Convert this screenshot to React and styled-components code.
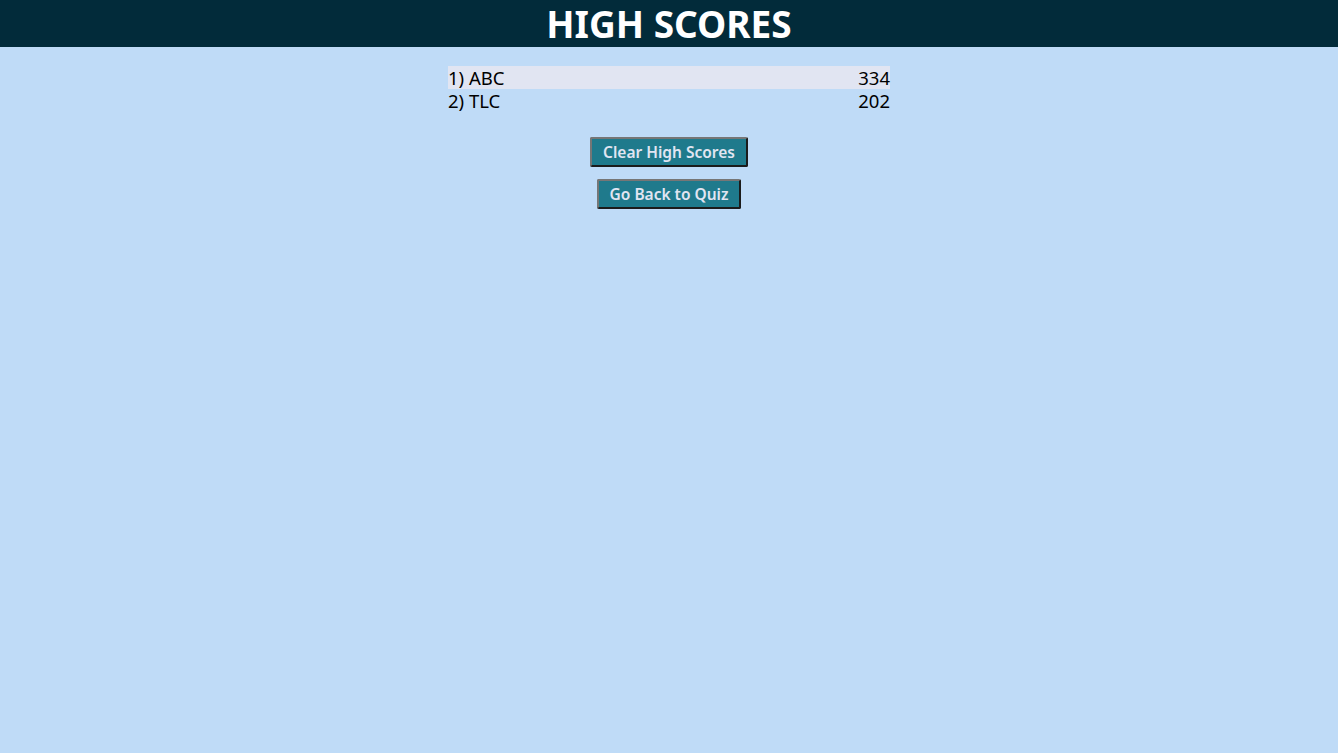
import React from 'react';
import styled, { createGlobalStyle } from 'styled-components';

const GlobalStyle = createGlobalStyle`
  html, body {
    margin: 0;
    padding: 0;
    background: #bfdbf7;
    font-family: "Trebuchet MS", "Noto Sans", sans-serif;
  }
`;

const Page = styled.div`
  min-height: 753px;
  background: #bfdbf7;
`;

const Header = styled.header`
  height: 47px;
  background: #022b3a;
  display: flex;
  align-items: center;
  justify-content: center;
`;

const Title = styled.h1`
  margin: 0;
  padding-top: 2px;
  color: #ffffff;
  font-size: 37px;
  font-weight: 700;
  line-height: 1.1;
`;

const Main = styled.main`
  display: flex;
  flex-direction: column;
  align-items: center;
  padding-top: 19px;
`;

const ScoreList = styled.ol`
  list-style: none;
  margin: 0 0 25px;
  padding: 0;
  width: 442px;
`;

const ScoreRow = styled.li`
  display: flex;
  justify-content: space-between;
  height: 23px;
  line-height: 24px;
  font-size: 18.5px;
  color: #000;
  background: ${(props) => (props.$striped ? '#e1e5f2' : 'transparent')};
`;

const Button = styled.button`
  font-family: "Trebuchet MS", "Noto Sans", sans-serif;
  font-size: 15.5px;
  font-weight: 600;
  color: #e1e5f2;
  background: #1f7a8c;
  border: 2px solid;
  border-color: #767676 #1b1b1b #1b1b1b #767676;
  border-radius: 2px;
  height: 30px;
  padding: 0 11px;
  margin-bottom: 12px;
  cursor: pointer;
`;

const scores = [
  { initials: 'ABC', score: 334 },
  { initials: 'TLC', score: 202 },
];

const App = () => (
  <Page>
    <GlobalStyle />
    <Header>
      <Title>HIGH SCORES</Title>
    </Header>
    <Main>
      <ScoreList>
        {scores.map((entry, index) => (
          <ScoreRow key={entry.initials} $striped={index % 2 === 0}>
            <span>{`${index + 1}) ${entry.initials}`}</span>
            <span>{entry.score}</span>
          </ScoreRow>
        ))}
      </ScoreList>
      <Button>Clear High Scores</Button>
      <Button>Go Back to Quiz</Button>
    </Main>
  </Page>
);

export default App;
